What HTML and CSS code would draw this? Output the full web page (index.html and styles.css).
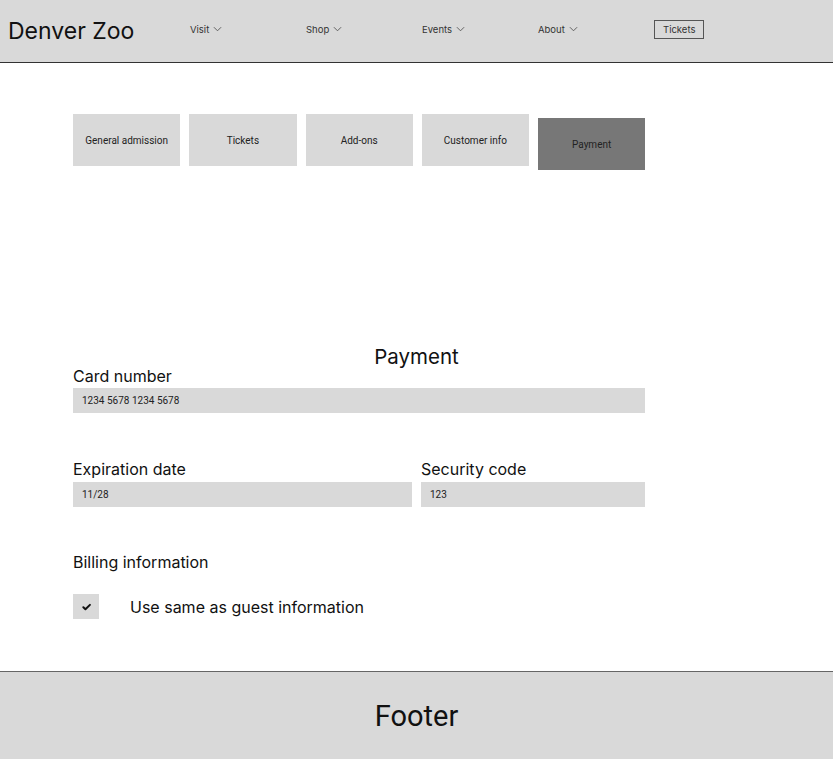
FILE: index.html
```html
<!DOCTYPE html>
<html>
<head>
<meta charset="utf-8">
<link rel="stylesheet" href="styles.css">
</head>
<body>
<header class="site-header">
  <div class="logo">Denver Zoo</div>
  <nav class="nav">
    <div class="nav-item">Visit <svg class="chev" viewBox="0 0 10 6"><path d="M1 1l4 4 4-4"/></svg></div>
    <div class="nav-item">Shop <svg class="chev" viewBox="0 0 10 6"><path d="M1 1l4 4 4-4"/></svg></div>
    <div class="nav-item">Events <svg class="chev" viewBox="0 0 10 6"><path d="M1 1l4 4 4-4"/></svg></div>
    <div class="nav-item">About <svg class="chev" viewBox="0 0 10 6"><path d="M1 1l4 4 4-4"/></svg></div>
    <div class="nav-item"><span class="tickets-btn">Tickets</span></div>
  </nav>
</header>
<main class="main">
  <div class="steps">
    <div class="step">General admission</div>
    <div class="step">Tickets</div>
    <div class="step">Add-ons</div>
    <div class="step">Customer info</div>
    <div class="step step-active">Payment</div>
  </div>
  <h1 class="form-title">Payment</h1>
  <section class="form">
    <div class="field">
      <label class="label">Card number</label>
      <div class="input">1234 5678 1234 5678</div>
    </div>
    <div class="row">
      <div class="field field-grow">
        <label class="label">Expiration date</label>
        <div class="input">11/28</div>
      </div>
      <div class="field field-code">
        <label class="label">Security code</label>
        <div class="input">123</div>
      </div>
    </div>
    <div class="billing">Billing information</div>
    <div class="check-row">
      <div class="checkbox"><svg viewBox="0 0 10 8"><path d="M1.5 4.3l2.3 2.2L8.8 1.6"/></svg></div>
      <span class="check-label">Use same as guest information</span>
    </div>
  </section>
</main>
<footer class="footer">Footer</footer>
</body>
</html>
```
FILE: styles.css
```css
html, body {
  margin: 0;
  padding: 0;
  background: #fff;
  font-family: Inter, "Noto Sans", sans-serif;
  color: #1a1a1a;
}
.site-header {
  height: 62px;
  background: #d9d9d9;
  border-bottom: 1px solid #333;
  display: flex;
  align-items: center;
}
.logo {
  width: 182px;
  padding-left: 8px;
  font-size: 23px;
  color: #111;
}
.nav {
  display: flex;
  align-items: center;
  margin-top: -4px;
}
.nav-item {
  width: 116px;
  font-size: 9.5px;
  color: #333;
  display: flex;
  align-items: center;
  gap: 4px;
}
.chev {
  width: 9px;
  height: 6px;
  fill: none;
  stroke: #555;
  stroke-width: 1;
}
.tickets-btn {
  display: inline-block;
  border: 1px solid #555;
  padding: 3px 8px;
  line-height: 11px;
}
.main {
  padding-top: 51px;
}
.steps {
  display: flex;
  gap: 9px;
  align-items: flex-start;
  padding-left: 73px;
}
.step {
  width: 107.25px;
  height: 52px;
  background: #d9d9d9;
  display: flex;
  align-items: center;
  justify-content: center;
  font-family: Roboto, sans-serif;
  font-size: 10px;
  color: #222;
}
.step-active {
  background: #777;
  margin-top: 4px;
}
.form-title {
  margin: 175px 0 -3px;
  text-align: center;
  font-weight: 400;
  font-size: 20.5px;
  line-height: 24px;
  color: #111;
}
.form {
  width: 572px;
  margin-left: 73px;
}
.field {
  display: flex;
  flex-direction: column;
}
.label {
  font-size: 16px;
  line-height: 20px;
  color: #111;
  margin-bottom: 2px;
}
.input {
  height: 25px;
  background: #d9d9d9;
  font-family: Roboto, sans-serif;
  font-size: 10px;
  color: #222;
  display: flex;
  align-items: center;
  padding-left: 9px;
}
.row {
  display: flex;
  gap: 9px;
  margin-top: 46px;
}
.row .label {
  margin-bottom: 3px;
}
.field-grow {
  flex: 1;
}
.field-code {
  width: 224px;
}
.billing {
  margin-top: 45px;
  font-size: 16px;
  line-height: 20px;
  color: #111;
}
.check-row {
  display: flex;
  align-items: center;
  gap: 31px;
  margin-top: 22px;
}
.checkbox {
  width: 26px;
  height: 25px;
  background: #d9d9d9;
  display: flex;
  align-items: center;
  justify-content: center;
}
.checkbox svg {
  width: 9px;
  height: 8px;
  fill: none;
  stroke: #111;
  stroke-width: 2.2;
  stroke-linecap: round;
  stroke-linejoin: round;
}
.check-label {
  font-size: 16px;
  color: #111;
}
.footer {
  margin-top: 52px;
  height: 88px;
  background: #d9d9d9;
  border-top: 1px solid #666;
  display: flex;
  align-items: center;
  justify-content: center;
  font-family: Roboto, sans-serif;
  font-size: 29px;
  color: #111;
}
```
